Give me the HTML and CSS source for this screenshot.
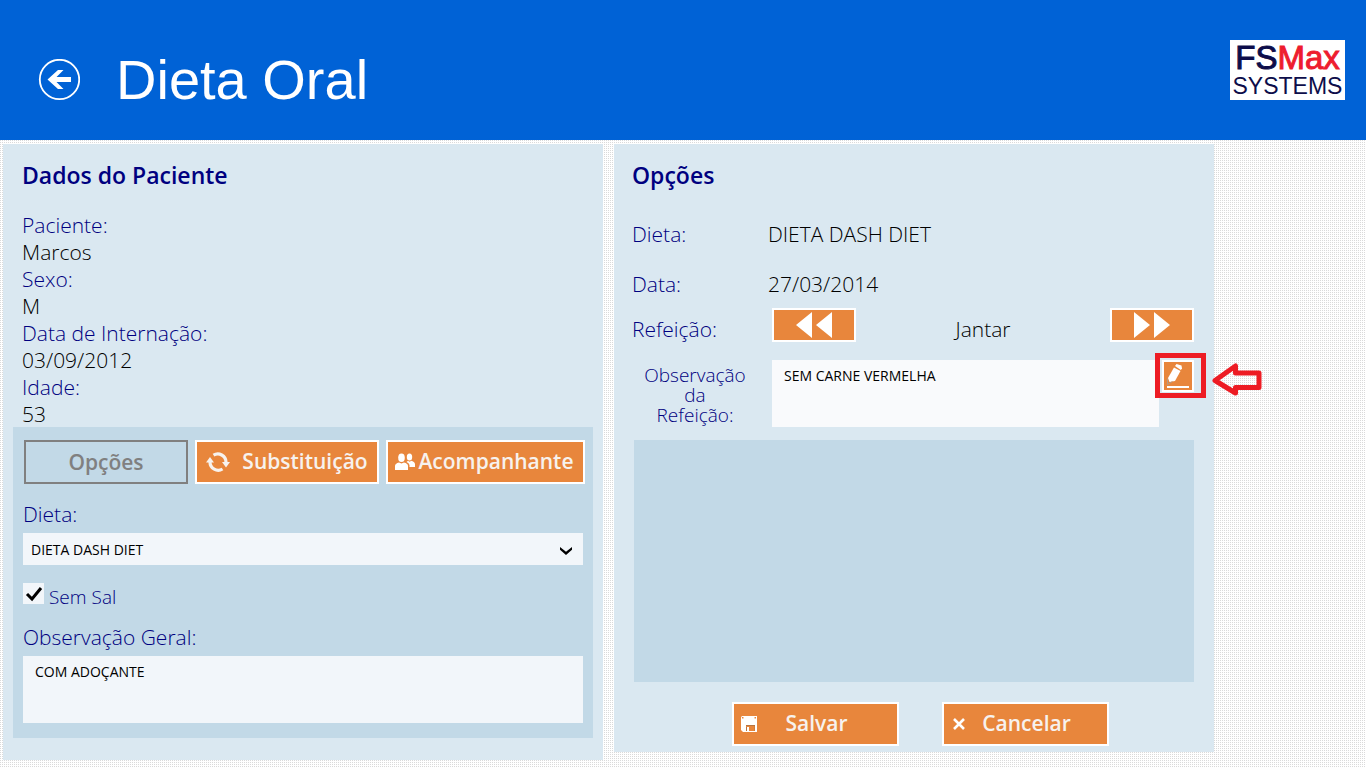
FILE: index.html
```html
<!DOCTYPE html>
<html lang="pt-BR">
<head>
<meta charset="utf-8">
<title>Dieta Oral</title>
<link rel="stylesheet" href="styles.css">
</head>
<body>
<header class="topbar">
  <button class="back" type="button" aria-label="Voltar">
    <svg viewBox="0 0 42 42" width="42" height="42"><circle cx="21.500" cy="20.500" r="19.700" fill="none" stroke="#fff" stroke-width="1.800"/><path d="M9.500 20.500L20 11h5.500L18.500 18H33v5H18.500L25.500 30H20Z" fill="#fff"/></svg>
  </button>
  <h1 class="page-title">Dieta Oral</h1>
  <div class="logo"><span class="logo-top">FS<span class="logo-red">Max</span></span><span class="logo-bottom">SYSTEMS</span></div>
</header>
<main class="content">
  <section class="panel patient">
    <h2 class="panel-title">Dados do Paciente</h2>
    <dl class="data">
      <dt>Paciente:</dt><dd>Marcos</dd>
      <dt>Sexo:</dt><dd>M</dd>
      <dt>Data de Internação:</dt><dd>03/09/2012</dd>
      <dt>Idade:</dt><dd>53</dd>
    </dl>
    <div class="diet">
      <div class="tabs">
        <button class="btn btn-off" type="button" disabled>Opções</button>
        <button class="btn btn-swap" type="button">
          <svg viewBox="0 0 24 22" width="24" height="22"><g fill="none" stroke="#f7f2ee" stroke-width="3.200"><path d="M7.500 4.200A8.200 8.200 0 0 1 20 11"/><path d="M16.500 18A8.200 8.200 0 0 1 4 11"/></g><path d="M16 11h8l-4 5.500ZM0 11.500h8L4 6Z" fill="#f7f2ee"/></svg>
          <span>Substituição</span>
        </button>
        <button class="btn btn-guest" type="button">
          <svg viewBox="0 0 20 18" width="20" height="18" fill="#fff"><ellipse cx="6.500" cy="4.800" rx="3.300" ry="4.300"/><path d="M0 17v-4q0-2.500 4-3.500l2.500 1 2.500-1q4 1 4 3.500v4Z"/><ellipse cx="14.500" cy="4" rx="2.700" ry="3.500"/><path d="M11.500 9l1.500-1.200 1.500.9 2-.9q3.500 1.200 3.500 3.500V14h-5.500v-2q-.5-2-3-3Z"/></svg>
          <span>Acompanhante</span>
        </button>
      </div>
      <label class="label diet-label" for="dieta">Dieta:</label>
      <div class="select-wrap">
        <select class="field select" id="dieta"><option>DIETA DASH DIET</option></select>
        <svg class="chevron" viewBox="0 0 12 8" width="12" height="8"><path d="M0 0l6 4.800L12 0v2.800L6 8 0 2.800Z" fill="#000"/></svg>
      </div>
      <div class="check-row">
        <input class="check" type="checkbox" id="sal" checked>
        <label class="check-label" for="sal">Sem Sal</label>
      </div>
      <label class="label" for="geral">Observação Geral:</label>
      <textarea class="field note" id="geral">COM ADOÇANTE</textarea>
    </div>
  </section>
  <section class="panel options">
    <h2 class="panel-title">Opções</h2>
    <div class="row row-diet"><span class="label">Dieta:</span><span>DIETA DASH DIET</span></div>
    <div class="row row-date"><span class="label">Data:</span><span>27/03/2014</span></div>
    <div class="row row-meal">
      <span class="label">Refeição:</span>
      <div class="meal">
        <button class="btn step" type="button" aria-label="Anterior"><svg viewBox="0 0 36 26" width="36" height="26" fill="#fff"><path d="M0 13L16 0v26ZM20 13L36 0v26Z"/></svg></button>
        <span class="meal-name">Jantar</span>
        <button class="btn step" type="button" aria-label="Próxima"><svg viewBox="0 0 36 26" width="36" height="26" fill="#fff"><path d="M16 13L0 0v26ZM36 13L20 0v26Z"/></svg></button>
      </div>
    </div>
    <div class="row row-note">
      <label class="note-label" for="obs">Observação<br>da<br>Refeição:</label>
      <div class="note-box">
        <textarea class="field note note-light" id="obs">SEM CARNE VERMELHA</textarea>
        <div class="edit-wrap">
          <button class="btn edit" type="button" aria-label="Editar"><svg viewBox="0 0 28 28" width="28" height="28"><path d="M4 16L10 5.500l6.500 3.500L11 19l-5.500 1Z" fill="#fff"/><path d="M11 4l1.500-2 5 1.500.5 3-1.200 1.600Z" fill="#fff"/><path d="M3.500 16.500v6l5-3" fill="none" stroke="#b39a86"/><path d="M3 24h22v2H3Z" fill="#fff"/></svg></button>
          <div class="mark"></div>
          <svg class="mark-arrow" viewBox="0 0 50 36" width="50" height="36"><path d="M3 18.500L23.500 4v7H47v14.500H23.500V31Z" fill="none" stroke="#ed1c24" stroke-width="5" stroke-linejoin="round"/></svg>
        </div>
      </div>
    </div>
    <div class="list"></div>
    <div class="actions">
      <button class="btn action" type="button">
        <svg viewBox="0 0 16 16" width="16" height="16"><path d="M0 1.500Q0 0 1.500 0H16v16H2L0 14Z" fill="#fff"/><path d="M5 9h9v6H5Z" fill="#b8743f"/><path d="M5 10h8.500v5H7v-4H5Z" fill="#e8863c"/><path d="M6 11h2v4H6Z" fill="#fff"/><path d="M1 1h1.500v1.500H1ZM13.500 1H15v1.500h-1.500Z" fill="#e8863c"/></svg>
        <span>Salvar</span>
      </button>
      <button class="btn action" type="button">
        <svg viewBox="0 0 16 16" width="16" height="16"><path d="M3 3l10 10M13 3L3 13" stroke="#fff" stroke-width="2.600"/></svg>
        <span>Cancelar</span>
      </button>
    </div>
  </section>
</main>
</body>
</html>
```
FILE: styles.css
```css
* { box-sizing: border-box; }

body {
  margin: 0;
  min-height: 100vh;
  color: #000;
  font: 300 21px/28px "Open Sans", "Noto Sans", sans-serif;
  background: #fff conic-gradient(#fff 75%, #dadada 0) 0 0 / 2px 2px;
}

button, select, textarea { font-family: inherit; }
svg { display: block; flex: none; }

.topbar {
  display: flex;
  align-items: center;
  min-height: 140px;
  padding: 20px 21px 0 38px;
  background: #0062d6;
  color: #fff;
}
.back { padding: 0; border: 0; background: none; }
.page-title {
  margin: 0 auto 0 36px;
  font: 400 56px/64px "Liberation Sans", Arial, sans-serif;
}
.logo {
  display: flex;
  flex-direction: column;
  align-items: center;
  width: 115px;
  height: 60px;
  margin-bottom: 20px;
  padding-top: 2px;
  background: #fff;
  color: #0d0d4a;
  font-family: "Liberation Sans", Arial, sans-serif;
  font-weight: 400;
}
.logo-top { font-size: 33px; line-height: 32px; -webkit-text-stroke: 1px currentColor; }
.logo-red { color: #ee1c2e; }
.logo-bottom { font-size: 23px; line-height: 24px; }

.content {
  display: flex;
  align-items: flex-start;
  gap: 11px;
  padding: 4px 3px 8px;
}
.panel { flex: 0 1 600px; min-width: 0; background: #dae8f1; }
.panel-title {
  margin: 0;
  color: #000080;
  font-size: 23px;
  line-height: 32px;
  font-weight: 600;
}
.label { color: #000080; }

.patient { padding: 15px 10px 22px; }
.patient .panel-title { padding-left: 9px; }
.data { margin: 20px 0 0; padding-left: 9px; }
.data dt { color: #000080; line-height: 28px; }
.data dd { margin: 0; line-height: 26px; }

.diet { padding: 13px 10px 15px; background: #c2d9e7; }
.tabs { display: flex; gap: 7px; height: 44px; margin: 0 -2px 0 1px; }
.btn {
  display: flex;
  align-items: center;
  justify-content: center;
  padding: 0;
  border: 2px solid #fff;
  background: #e8863c;
  color: #f7f2ee;
  font-size: 21px;
  font-weight: 600;
}
.btn span { padding-bottom: 2px; }
.btn-off { flex: 0 1 164px; border-color: #808080; background: none; color: #808080; }
.btn-swap { flex: 0 1 184px; gap: 12px; }
.btn-guest { flex: 0 1 199px; gap: 3px; padding-right: 2px; }

.diet-label { display: block; margin: 16px 0 5px; }
.field {
  display: block;
  width: 100%;
  border: 0;
  border-radius: 0;
  background: #f2f6fa;
  color: #000;
  font-size: 14px;
  font-weight: 400;
}
.select-wrap { position: relative; }
.select { height: 32px; padding: 0 8px; appearance: none; }
.chevron { position: absolute; right: 11px; top: 14px; pointer-events: none; }
.check-row { display: flex; gap: 5px; margin: 18px 0 12px; }
.check {
  width: 21px;
  height: 21px;
  margin: 0;
  appearance: none;
  background: #f2f6fa;
}
.check:checked {
  background: #f2f6fa url("data:image/svg+xml,%3Csvg xmlns='http://www.w3.org/2000/svg' viewBox='0 0 21 21'%3E%3Cpath d='M4 11l5 5 9-11' fill='none' stroke='%23000' stroke-width='3'/%3E%3C/svg%3E");
}
.check-label { color: #000080; font-size: 19px; }
.note {
  height: 67px;
  padding: 6px 12px;
  line-height: 20px;
  resize: none;
  overflow: hidden;
}
.diet .note { margin-top: 5px; }

.options { padding: 15px 20px 6px 18px; }
.row { display: grid; grid-template-columns: 136px 1fr; align-items: center; }
.row-diet { margin-top: 29px; }
.row-date { margin-top: 22px; }
.row-meal { margin-top: 9px; }
.meal { display: flex; align-items: center; justify-content: space-between; padding-left: 4px; }
.meal-name, .row-meal .label { padding-top: 8px; }
.step { width: 84px; height: 34px; }
.row-note { margin-top: 17px; grid-template-columns: 140px 1fr; align-items: start; }
.note-label {
  padding: 5px 25px 0 11px;
  color: #000080;
  font-size: 19px;
  line-height: 20px;
  text-align: center;
}
.note-box { display: flex; align-items: flex-start; gap: 3px; }
.note-light { flex: 1; min-width: 0; background: #f9fafc; }
.edit-wrap { position: relative; }
.edit { width: 32px; height: 32px; }
.mark {
  position: absolute;
  inset: -7px -12px -6px -7px;
  border: 5px solid #ed1c24;
  pointer-events: none;
}
.mark-arrow { position: absolute; left: 50px; top: 2px; }
.list { height: 242px; margin: 13px 0 0 2px; background: #c2d9e7; }
.actions { display: flex; justify-content: center; gap: 43px; margin-top: 20px; padding-left: 15px; }
.action { flex: 0 1 167px; height: 44px; justify-content: flex-start; padding-left: 7px; }
.action span { flex: 1; padding-right: 21px; }
```
